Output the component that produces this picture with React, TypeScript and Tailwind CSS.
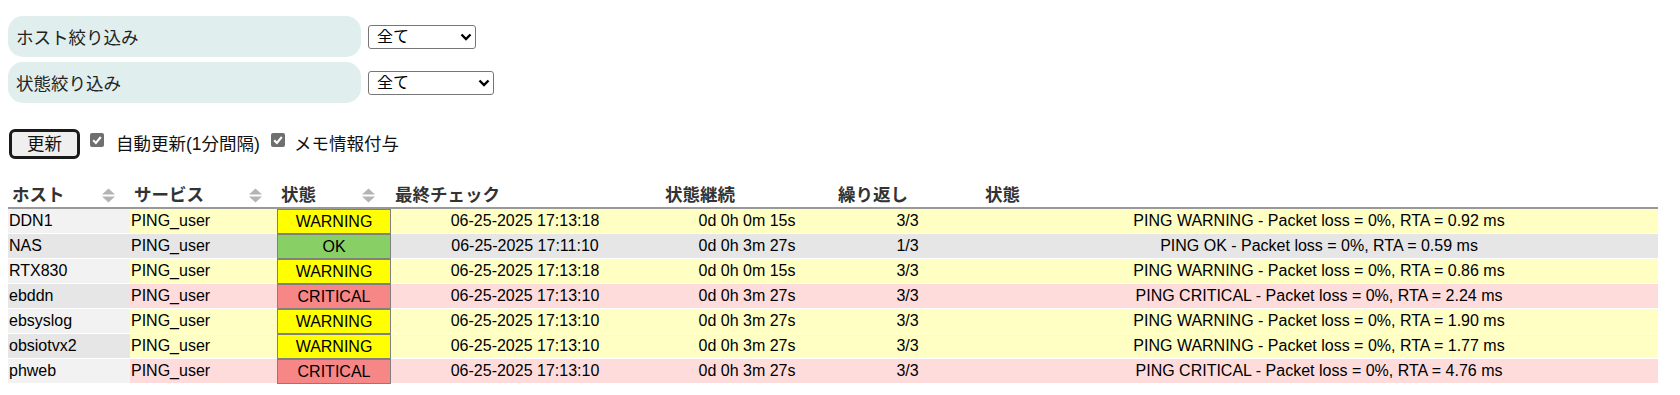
import React from 'react';

type Row = {
  host: string;
  state: 'WARNING' | 'OK' | 'CRITICAL';
  last: string;
  dur: string;
  att: string;
  info: string;
};

const rows: Row[] = [
  { host: 'DDN1', state: 'WARNING', last: '06-25-2025 17:13:18', dur: '0d 0h 0m 15s', att: '3/3', info: 'PING WARNING - Packet loss = 0%, RTA = 0.92 ms' },
  { host: 'NAS', state: 'OK', last: '06-25-2025 17:11:10', dur: '0d 0h 3m 27s', att: '1/3', info: 'PING OK - Packet loss = 0%, RTA = 0.59 ms' },
  { host: 'RTX830', state: 'WARNING', last: '06-25-2025 17:13:18', dur: '0d 0h 0m 15s', att: '3/3', info: 'PING WARNING - Packet loss = 0%, RTA = 0.86 ms' },
  { host: 'ebddn', state: 'CRITICAL', last: '06-25-2025 17:13:10', dur: '0d 0h 3m 27s', att: '3/3', info: 'PING CRITICAL - Packet loss = 0%, RTA = 2.24 ms' },
  { host: 'ebsyslog', state: 'WARNING', last: '06-25-2025 17:13:10', dur: '0d 0h 3m 27s', att: '3/3', info: 'PING WARNING - Packet loss = 0%, RTA = 1.90 ms' },
  { host: 'obsiotvx2', state: 'WARNING', last: '06-25-2025 17:13:10', dur: '0d 0h 3m 27s', att: '3/3', info: 'PING WARNING - Packet loss = 0%, RTA = 1.77 ms' },
  { host: 'phweb', state: 'CRITICAL', last: '06-25-2025 17:13:10', dur: '0d 0h 3m 27s', att: '3/3', info: 'PING CRITICAL - Packet loss = 0%, RTA = 4.76 ms' },
];

const rowBg = {
  WARNING: 'bg-[#ffffc4]',
  OK: 'bg-[#e6e6e6]',
  CRITICAL: 'bg-[#ffdcdc]',
};

const stateBg = {
  WARNING: 'bg-[#ffff00]',
  OK: 'bg-[#88cf66]',
  CRITICAL: 'bg-[#f78787]',
};

const SortIcon = () => (
  <svg width="13" height="15" viewBox="0 0 13 15" className="shrink-0">
    <path d="M6.5 0.5 L13 6.5 L0 6.5Z" fill="#b4b4b4" />
    <path d="M0 8.5 L13 8.5 L6.5 14.5Z" fill="#b4b4b4" />
  </svg>
);

const Select = ({ width }: { width: string }) => (
  <div className={`relative ${width} h-[24px]`}>
    <select className="appearance-none w-full h-full border border-[#767676] rounded-[3px] bg-white pl-[8px] text-[16px] leading-none text-black">
      <option>全て</option>
    </select>
    <svg
      width="12"
      height="8"
      viewBox="0 0 12 8"
      className="absolute right-[4px] top-[8px] pointer-events-none"
    >
      <path d="M1.5 1.5 L6 6 L10.5 1.5" fill="none" stroke="#000" strokeWidth="2.4" />
    </svg>
  </div>
);

const Check = ({ className }: { className: string }) => (
  <div className={`${className} mb-[9px] w-[14px] h-[14px] rounded-[2px] bg-[#6f6f6f] flex items-center justify-center shrink-0`}>
    <svg width="12" height="12" viewBox="0 0 12 12">
      <path d="M2.2 6.2 L4.9 8.9 L9.8 3" fill="none" stroke="#fff" strokeWidth="2.1" />
    </svg>
  </div>
);

const Filter = ({ label, width }: { label: string; width: string }) => (
  <div className="flex items-center gap-[7px]">
    <div className="w-[353px] h-[41px] rounded-[15px] bg-[#e0eeee] flex items-center pl-[8px] pt-[3px] text-[17.5px] text-[#222]">
      {label}
    </div>
    <Select width={width} />
  </div>
);

const App = () => {
  return (
    <div className="min-h-screen bg-white px-2 pt-4 font-['Liberation_Sans','Noto_Sans_CJK_JP',sans-serif] text-black">
      <div className="flex flex-col gap-[5px]">
        <Filter label="ホスト絞り込み" width="w-[108px]" />
        <Filter label="状態絞り込み" width="w-[126px]" />
      </div>

      <div className="mt-[26px] flex items-center h-[30px] text-[17.5px] text-[#111]">
        <button
          type="button"
          className="ml-px w-[71px] h-[30px] border-[3px] border-[#1a1a1a] rounded-[6px] bg-[#efefef] flex items-center justify-center"
        >
          更新
        </button>
        <Check className="ml-[10px]" />
        <span className="ml-[12px]">自動更新(1分間隔)</span>
        <Check className="ml-[11px]" />
        <span className="ml-[9px]">メモ情報付与</span>
      </div>

      <table className="mt-[24px] w-[1650px] table-fixed border-separate border-spacing-0 text-[16px] leading-[20px]">
        <colgroup>
          <col className="w-[122px]" />
          <col className="w-[147px]" />
          <col className="w-[114px]" />
          <col className="w-[268px]" />
          <col className="w-[176px]" />
          <col className="w-[145px]" />
          <col />
        </colgroup>
        <thead>
          <tr className="h-[26px] text-[17.5px] text-[#333]">
            <th className="border-b-2 border-[#999] p-0 pl-[4px] text-left font-bold">
              <div className="flex items-center pr-[15px]">
                <span>ホスト</span>
                <span className="ml-auto"><SortIcon /></span>
              </div>
            </th>
            <th className="border-b-2 border-[#999] p-0 pl-[4px] text-left font-bold">
              <div className="flex items-center pr-[15px]">
                <span>サービス</span>
                <span className="ml-auto"><SortIcon /></span>
              </div>
            </th>
            <th className="border-b-2 border-[#999] p-0 pl-[4px] text-left font-bold">
              <div className="flex items-center pr-[16px]">
                <span>状態</span>
                <span className="ml-auto"><SortIcon /></span>
              </div>
            </th>
            <th className="border-b-2 border-[#999] p-0 pl-[4px] text-left font-bold">最終チェック</th>
            <th className="border-b-2 border-[#999] p-0 pl-[6px] text-left font-bold">状態継続</th>
            <th className="border-b-2 border-[#999] p-0 pl-[3px] text-left font-bold">繰り返し</th>
            <th className="border-b-2 border-[#999] p-0 pl-[5px] text-left font-bold">状態</th>
          </tr>
        </thead>
        <tbody>
          {rows.map((r, i) => (
            <tr key={r.host} className="h-[25px]">
              <td className={`p-0 pl-px border-b border-white ${i % 2 === 0 ? 'bg-[#f2f2f2]' : 'bg-[#e6e6e6]'}`}>
                {r.host}
              </td>
              <td className={`p-0 pl-px border-b border-white ${rowBg[r.state]}`}>PING_user</td>
              <td className={`p-0 text-center border border-[#808080] ${stateBg[r.state]}`}>{r.state}</td>
              <td className={`p-0 text-center border-b border-white ${rowBg[r.state]}`}>{r.last}</td>
              <td className={`p-0 text-center border-b border-white ${rowBg[r.state]}`}>{r.dur}</td>
              <td className={`p-0 text-center border-b border-white ${rowBg[r.state]}`}>{r.att}</td>
              <td className={`p-0 text-center border-b border-white ${rowBg[r.state]}`}>{r.info}</td>
            </tr>
          ))}
        </tbody>
      </table>
    </div>
  );
};

export default App;
